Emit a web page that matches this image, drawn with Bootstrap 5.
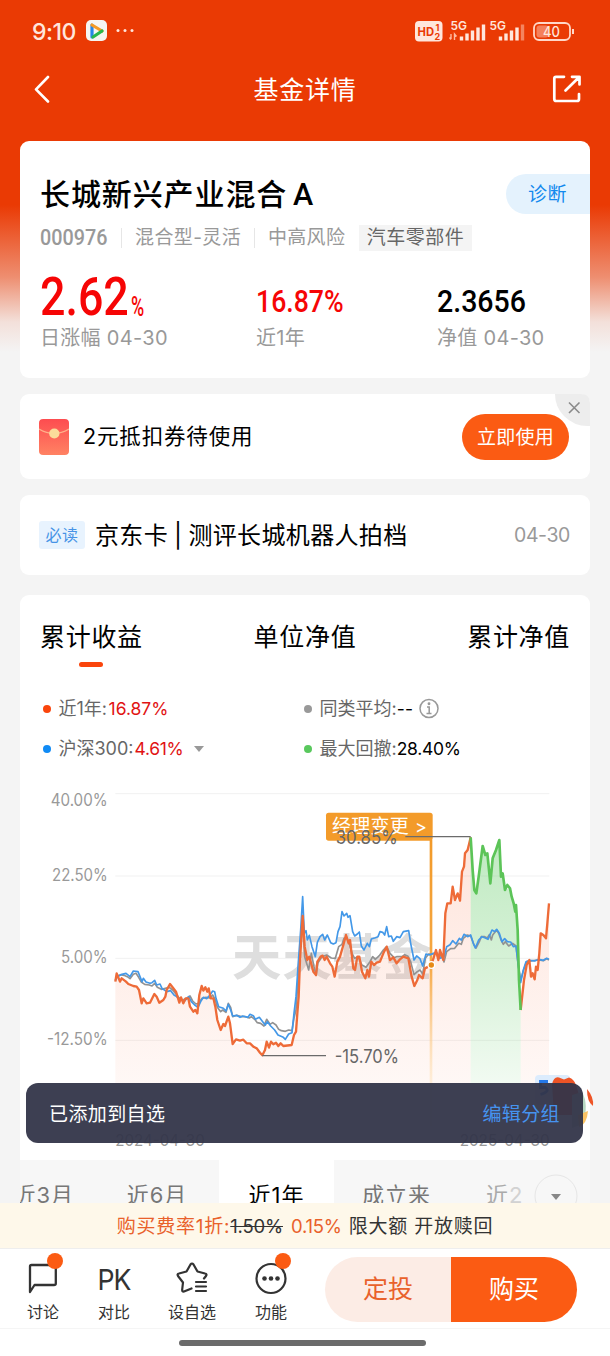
<!DOCTYPE html>
<html lang="zh-CN">
<head>
<meta charset="utf-8">
<meta name="viewport" content="width=device-width, initial-scale=1">
<title>基金详情</title>
<link rel="stylesheet" href="https://cdn.jsdelivr.net/npm/bootstrap@5.3.0/dist/css/bootstrap.min.css">
<style>
body{width:610px;height:1356px;overflow:hidden;background:#f4f4f4;color:#000;font-family:Inter,"Noto Sans CJK SC",sans-serif;line-height:1;white-space:nowrap}
.page-bg{background:linear-gradient(180deg,#ea3a04 0,#ea3a04 205px,#ee8e70 277px,#f3e0da 322px,#f4f4f4 352px)}
.status-row{height:62px;padding:0 35px 0 32px;color:#ffe6dc}
.title-row{height:54px;margin-bottom:25px;padding:0 28px 0 34px}
.page-title{font-size:25px;letter-spacing:.7px;padding:2px 0 0 8px}
.panel{background:#fff;border-radius:9px;margin:0 20px;padding:0 20px;position:relative}
.p-fund{height:236.5px;padding-top:33px;margin-bottom:16.5px}
.fund-name{font-size:30px;font-weight:500;letter-spacing:.9px;padding-top:2px}
.fund-name .share{font-family:Roboto,sans-serif;font-weight:500;font-size:30.5px;margin-left:-3px}
.diag{width:84px;height:40px;margin-right:-20px;padding:1px 1px 0 0;border-radius:20px 0 0 20px;background:#e4f2fd;color:#1289ee;font-size:19px;letter-spacing:.5px}
.meta{height:26px;margin-top:10px;font-size:19px;letter-spacing:.8px;color:#999;padding-top:1px}
.meta .sep{width:1px;height:20px;background:#e6e6e6}
.tagbox{background:#f4f4f4;color:#666;height:26px;width:113px}
.din{font-family:Roboto,sans-serif;display:inline-block;transform-origin:0 50%}
.figures{grid-template-columns:216px 181px 1fr;margin-top:25px;display:grid}
.figures .num{height:44px;line-height:1;font-weight:500}
.cap{font-size:20px;letter-spacing:.3px;color:#999;margin-top:9px}
.red1{color:#f60505}
.p-coupon{height:85px;margin-bottom:16px}
.usebtn{width:107px;height:46px;border-radius:23px;background:#fb5b13;color:#fff;font-size:19px;letter-spacing:.2px;position:relative}
.closer{position:absolute;right:0;top:0}
.p-read{height:80px;margin-bottom:20px}
.must{background:#e8f3fe;color:#4793e6;width:46px;height:28px;border-radius:3px;font-size:16px;letter-spacing:.5px;margin-left:-1px}
.p-chart{height:700px;padding:0}
.tabs3{height:84px;padding:1px 21px 0 20px;font-size:25px;letter-spacing:.7px}
.tabs3 .on::after{content:"";position:absolute;width:24px;height:5px;border-radius:3px;background:#fa450c;left:39px;top:37px}
.legend{display:grid;grid-template-columns:261px 1fr;grid-auto-rows:40px;padding:10px 0 0 23px;font-size:18px;color:#666;height:101px}
.dot{width:8px;height:8px;border-radius:50%;margin-right:7.5px}
.legend b{font-weight:400;letter-spacing:-.3px;font-size:17.5px}
.periods{height:70px;background:#f7f7f7;font-size:22px;letter-spacing:1px;color:#777;overflow:hidden;position:relative}
.periods>div{height:70px;flex:none}
.fee{height:46px;background:#fef8ea;font-size:19px;letter-spacing:.75px;color:#333;border-bottom:1px solid #eee;padding-top:1px}
.fee s,.fee .num{font-size:18.5px;letter-spacing:-.2px}
.org{color:#e9612b}
.bar{height:80px;background:#fff;border-bottom:1px solid #f5f5f5;padding-left:7px;color:#333}
.tool{font-size:16px;position:relative;padding-top:8px;height:80px}
.tool svg,.tool .pk{height:44px;margin-bottom:3px}
.tool .pk{font-size:29px;letter-spacing:-1px;padding-top:8px;transform:scaleX(.92)}
.note{position:absolute;width:16px;height:16px;border-radius:50%;background:#fb5b13;top:4px}
.deal{font-size:25px;width:126px;height:64.5px}
.homebar{height:27px;background:#fff;padding-right:5px}
.homebar i{width:247px;height:6px;border-radius:3px;background:#6b6b6b}
.snack{position:absolute;z-index:5;left:26px;top:1083px;width:557px;height:60px;border-radius:12px;background:rgba(51,53,73,.95);color:#fff;padding:2px 23px 0;font-size:19px;letter-spacing:.4px}
.mascot{position:absolute;z-index:4;left:530px;top:1070px}
</style>
</head>
<body>
<div class="page-bg d-flex flex-column h-100">
<header class="text-white">
 <div class="status-row d-flex align-items-center justify-content-between">
  <div class="d-flex align-items-center">
   <span style="font-size:23px;font-weight:500;letter-spacing:-.5px;padding-top:2px">9:10</span>
   <svg class="ms-2" width="56" height="22" viewBox="0 0 56 22"><rect x="2" y="0" width="21" height="21" rx="5" fill="#f5f5f2"/><path d="M8 5v12" stroke="#2687e8" stroke-width="3.2" stroke-linecap="round"/><path d="M8 5l10 6" stroke="#f49a25" stroke-width="3.2" stroke-linecap="round"/><path d="M18 11l-9 6" stroke="#27b84d" stroke-width="3.2" stroke-linecap="round"/><g fill="#ffe6dc"><circle cx="34" cy="10.500" r="1.500"/><circle cx="41" cy="10.500" r="1.500"/><circle cx="48" cy="10.500" r="1.500"/></g></svg>
  </div>
  <svg width="160" height="24" viewBox="0 0 160 24" font-family="Inter,sans-serif" fill="#ffe6dc">
   <rect x="0" y="2" width="27.500" height="20.500" rx="4"/><text x="2.500" y="17" font-size="12" font-weight="700" fill="#ea3a04" textLength="16.500" lengthAdjust="spacingAndGlyphs">HD</text><text x="20.500" y="11.500" font-size="9" font-weight="700" fill="#ea3a04">1</text><text x="19.500" y="20.500" font-size="9" font-weight="700" fill="#ea3a04">2</text>
   <text x="35.500" y="10.500" font-size="12" font-weight="600" textLength="16.500" lengthAdjust="spacingAndGlyphs">5G</text><text x="74.500" y="10.500" font-size="12" font-weight="600" textLength="16.500" lengthAdjust="spacingAndGlyphs">5G</text>
   <path d="M36 15v5M34.500 18.500l1.500 2M39.500 21v-6l2 2.500" stroke="#ffb99f" stroke-width="1.400" fill="none"/>
   <path d="M46.500 21.500v-4M52 21.500v-7M57.500 21.500v-10M63 21.500v-13M68.500 21.500v-16M85.500 21.500v-4M91 21.500v-7M96.500 21.500v-10M102 21.500v-13" stroke="#ffe6dc" stroke-width="3.400"/><path d="M107.500 21.500v-16" stroke="#f4845f" stroke-width="3.400"/>
   <rect x="119" y="4" width="36" height="17" rx="5" fill="none" stroke="#ffd7c8" stroke-width="1.800"/><rect x="121.500" y="6.500" width="12" height="12" rx="3" fill="#f4805c"/><path d="M158 10v5" stroke="#ffd7c8" stroke-width="2"/><text x="128" y="17.500" font-size="14" font-weight="500" textLength="17" lengthAdjust="spacingAndGlyphs">40</text>
  </svg>
 </div>
 <nav class="title-row d-flex align-items-center justify-content-between">
  <svg width="16" height="28" viewBox="0 0 16 28" fill="none" stroke="#fff" stroke-width="2.600" stroke-linecap="round" stroke-linejoin="round"><path d="M14 2L2 14.300L14 26.500"/></svg>
  <span class="page-title">基金详情</span>
  <svg width="30" height="28" viewBox="0 0 30 28" fill="none" stroke="#fff" stroke-width="2.700" stroke-linecap="round" stroke-linejoin="round"><path d="M12 1.800H4Q2.300 1.800 2.300 3.500V24Q2.300 26 4.300 26H25Q27 26 27 24V19M20 1.800H27.500V9.500M27 2.300L13.500 15.500"/></svg>
 </nav>
</header>

<main class="flex-grow-1 overflow-hidden">
 <section class="panel p-fund">
  <div class="d-flex align-items-center justify-content-between"><h1 class="fund-name m-0">长城新兴产业混合 <span class="share">A</span></h1><div class="diag d-flex align-items-center justify-content-center">诊断</div></div>
  <div class="meta d-flex align-items-center"><span class="din" style="font-size:21.5px;font-weight:500;letter-spacing:0;width:81px;margin-right:0;transform:scaleX(.92)">000976</span><i class="sep"></i><span style="width:119px;margin-left:13px;letter-spacing:.4px">混合型-灵活</span><i class="sep"></i><span style="width:91px;margin-left:13px;letter-spacing:.3px">中高风险</span><span class="tagbox d-flex align-items-center justify-content-center" style="letter-spacing:.5px">汽车零部件</span></div>
  <div class="figures">
   <div><div class="num red1 d-flex align-items-end"><span class="din" style="font-size:53px;width:91px;transform:scaleX(.845);line-height:44px">2.62</span><span class="din" style="font-size:28px;transform:scaleX(.64);line-height:24px">%</span></div><div class="cap">日涨幅 04-30</div></div>
   <div><div class="num red1 d-flex align-items-end"><span class="din" style="font-size:31px;transform:scaleX(.86);line-height:34px">16.87%</span></div><div class="cap">近1年</div></div>
   <div><div class="num d-flex align-items-end"><span class="din" style="font-size:31px;transform:scaleX(.92);line-height:34px">2.3656</span></div><div class="cap">净值 04-30</div></div>
  </div>
 </section>

 <section class="panel p-coupon d-flex align-items-center">
  <svg style="margin-left:-1px" width="30" height="36" viewBox="0 0 29 36" preserveAspectRatio="none"><defs><linearGradient id="env" x2="0" y2="1"><stop stop-color="#fd4c50"/><stop offset="1" stop-color="#ff8263"/></linearGradient></defs><rect width="29" height="36" rx="4" fill="url(#env)"/><path d="M0 10Q14.500 19 29 10" fill="none" stroke="#ffb08a" stroke-width="1.300"/><circle cx="14.800" cy="14.500" r="5" fill="#fbdb9b"/></svg>
  <span class="flex-grow-1" style="font-size:21.5px;letter-spacing:.85px;margin-left:14px">2元抵扣券待使用</span>
  <svg class="closer" width="35" height="33" viewBox="0 0 35 33"><path d="M0 0H26Q35 0 35 9V32Q20 33 9 22Q0 13 0 0Z" fill="#ededed"/><path d="M14 8.500l10.500 10.500M24.500 8.500l-10.500 10.500" stroke="#8a8a8a" stroke-width="1.600"/></svg>
  <div class="usebtn d-flex align-items-center justify-content-center" style="margin-right:1px;padding-top:1px">立即使用</div>
 </section>

 <section class="panel p-read d-flex align-items-center">
  <span class="must d-flex align-items-center justify-content-center">必读</span>
  <span class="flex-grow-1" style="font-size:24px;letter-spacing:.35px;margin-left:10px;padding-top:1px">京东卡<span style="padding:0 6px">|</span>测评长城机器人拍档</span>
  <span style="font-size:19.5px;letter-spacing:-.4px;color:#999;padding-top:1px">04-30</span>
 </section>

 <section class="panel p-chart">
  <div class="tabs3 d-flex align-items-center justify-content-between"><span class="on position-relative">累计收益</span><span>单位净值</span><span style="margin-right:-1px">累计净值</span></div>
  <div class="legend">
   <div class="d-flex align-items-center"><i class="dot" style="background:#fa450c"></i>近1年:<b style="color:#e11313;letter-spacing:0;margin-left:1.5px">16.87%</b></div>
   <div class="d-flex align-items-center"><i class="dot" style="background:#999"></i>同类平均:<b class="text-black" style="letter-spacing:.3px">--</b><svg width="22" height="22" viewBox="0 0 22 22" fill="none" stroke="#999" stroke-width="1.500" style="margin-left:5px"><circle cx="11" cy="10.500" r="9"/><path d="M9 9h2.200V15.500M8.500 15.500h5"/><circle cx="11" cy="5.800" r=".7" fill="#999"/></svg></div>
   <div class="d-flex align-items-center"><i class="dot" style="background:#108bf5"></i>沪深300:<b style="color:#e11313;margin-left:1px">4.61%</b><svg width="12" height="8" viewBox="0 0 12 8" style="margin-left:10px"><path d="M1 1h10L6 7Z" fill="#999"/></svg></div>
   <div class="d-flex align-items-center"><i class="dot" style="background:#59c85d"></i>最大回撤:<b class="text-black">28.40%</b></div>
  </div>
  <svg class="d-block" width="570" height="380" viewBox="0 0 1710 1140" font-family="Inter,'Noto Sans CJK SC',sans-serif">
   <defs>
    <linearGradient id="ga" gradientUnits="userSpaceOnUse" x1="0" y1="170" x2="0" y2="1000"><stop stop-color="#f9602c" stop-opacity=".17"/><stop offset="1" stop-color="#f9602c" stop-opacity=".03"/></linearGradient>
    <linearGradient id="gg" gradientUnits="userSpaceOnUse" x1="0" y1="170" x2="0" y2="1000"><stop stop-color="#57c75b" stop-opacity=".38"/><stop offset=".5" stop-color="#57c75b" stop-opacity=".23"/><stop offset="1" stop-color="#57c75b" stop-opacity=".04"/></linearGradient>
    <linearGradient id="gf" gradientUnits="userSpaceOnUse" x1="0" y1="180" x2="0" y2="930"><stop stop-color="#f29a29"/><stop offset=".5" stop-color="#f6a844"/><stop offset="1" stop-color="#ffe2b6" stop-opacity=".35"/></linearGradient>
   </defs>
   <path d="M286 41H1588M286 288H1588M286 535H1588M286 781H1588" stroke="#f1f1f1" stroke-width="3"/>
   <text x="636" y="586" font-size="148" font-weight="700" fill="#dedede" textLength="600">天天基金</text>
   <path fill="url(#ga)" d="M286 605L290 580 300 605 318 605 340 618 357 630 365 670 390 668 403 642 418 668 436 650 450 612 468 635 478 668 505 655 520 695 532 700 545 618 572 655 586 680 602 750 625 710 638 792 680 790 727 826 740 785 815 795 828 755 840 540 848 408 854 500 862 540 888 585 902 530 920 530 944 590 978 465 1005 570 1018 530 1036 595 1062 555 1100 500 1120 532 1165 535 1183 618 1215 565 1234 555 1248 510 1270 540 1276 400 1282 370 1292 370 1298 320 1305 360 1320 362 1326 275 1335 220 1352 172V1140H286ZM1502 690L1512 600 1528 540 1544 598 1562 460 1578 475 1587 370V1140H1502Z"/>
   <path fill="url(#gg)" d="M1352 172L1358 270 1363 330 1369 340 1376 290 1388 198 1396 225 1402 220 1411 310 1418 235 1428 210 1438 180 1443 290 1448 280 1455 330 1470 325 1481 370 1488 375 1493 450 1502 690V1140H1352Z"/>
   <rect x="1229" y="180" width="8" height="860" fill="url(#gf)"/>
   <g fill="none" stroke-linejoin="round">
    <path stroke="#929292" stroke-width="5" d="M286 600L292 588 302 584 312 586 322 590 330 596 340 583 348 580 356 592 364 606 374 613 388 615 396 618 404 610 412 622 424 628 436 625 448 622 458 630 466 640 476 652 488 660 500 655 510 648 518 663 528 672 536 670 546 655 558 652 570 654 578 645 586 660 592 682 602 695 608 690 618 697 625 670 632 682 638 710 650 706 664 710 676 710 688 714 694 710 704 718 712 728 722 730 732 738 740 718 750 733 758 728 768 735 776 748 784 752 796 754 806 750 816 752 822 714 828 690 834 600 842 490 848 425 854 530 866 570 874 520 882 560 888 586 894 548 906 530 920 525 934 534 946 535 956 500 966 493 972 475 980 472 988 492 996 520 1004 535 1014 530 1026 555 1038 562 1050 545 1058 530 1066 538 1078 527 1090 510 1100 500 1110 520 1122 533 1130 530 1146 530 1154 524 1164 529 1172 545 1182 584 1192 575 1200 570 1208 582 1216 535 1226 522 1240 522 1248 518 1256 535 1264 524 1272 546 1280 515 1292 506 1304 505 1316 490 1324 493 1330 475 1342 465 1352 468 1362 495 1368 504 1378 485 1384 470 1394 470 1402 474 1408 464 1414 480 1418 465 1430 450 1436 460 1444 482 1450 493 1456 485 1466 498 1478 490 1488 498 1494 550 1502 600 1510 572 1520 545 1538 542 1556 540 1570 542 1580 536 1587 540"/>
    <path stroke="#4398e8" stroke-width="5" d="M286 602L292 590 306 583 318 580 330 590 340 573 354 575 360 590 366 605 370 595 378 606 390 610 396 608 404 601 410 615 420 612 426 625 440 635 452 632 462 645 470 650 480 660 494 663 506 650 514 665 524 675 534 682 542 665 550 652 560 656 570 645 578 633 584 635 588 655 596 680 610 685 618 693 625 673 632 690 638 708 650 706 660 712 668 708 684 712 690 703 700 707 706 718 718 712 728 725 736 735 742 725 752 738 764 750 774 765 790 772 796 778 806 762 816 758 822 700 828 650 834 560 842 450 848 350 853 460 858 452 862 480 868 466 876 500 886 530 892 487 900 470 908 463 914 480 922 465 932 488 940 492 948 488 954 455 960 440 966 395 972 408 980 400 984 412 990 407 998 455 1004 468 1012 462 1018 456 1024 498 1032 510 1042 490 1048 500 1054 477 1066 473 1074 470 1080 455 1088 457 1094 465 1100 440 1106 470 1114 468 1120 484 1130 470 1140 473 1150 455 1166 452 1172 490 1182 540 1190 528 1200 536 1208 558 1218 522 1230 525 1240 520 1250 518 1260 535 1272 530 1280 500 1290 494 1298 482 1308 492 1318 475 1324 480 1332 463 1344 470 1352 465 1360 490 1366 504 1376 480 1386 470 1396 474 1404 478 1410 464 1416 450 1424 455 1430 448 1438 460 1446 485 1454 476 1462 485 1472 486 1480 500 1488 498 1494 550 1502 608 1510 570 1518 545 1530 541 1544 543 1556 538 1570 541 1580 535 1587 538"/>
    <path stroke="#ee6b38" stroke-width="7" d="M286 605L290 580 300 605 305 595 318 605 325 612 340 618 350 620 357 630 365 670 370 655 380 670 390 668 403 642 410 650 418 668 430 660 436 650 440 630 450 612 460 625 468 635 478 668 483 652 490 670 497 655 505 655 510 680 520 695 526 690 532 700 538 645 545 618 550 632 556 622 562 635 566 625 572 655 580 655 586 680 592 720 602 750 610 732 615 738 625 710 630 730 638 792 648 778 660 782 670 779 680 790 690 790 700 800 710 805 720 818 727 826 735 810 740 785 747 803 753 785 760 793 768 788 775 798 782 790 790 798 815 795 822 765 828 755 832 700 836 650 840 540 848 408 854 500 858 520 862 540 868 530 880 575 888 585 892 545 902 530 908 527 914 540 920 530 930 550 937 560 944 590 952 545 960 530 970 495 978 465 986 490 990 480 1000 565 1005 570 1012 530 1018 530 1026 575 1036 595 1042 570 1047 590 1054 545 1062 555 1070 548 1080 545 1090 520 1100 500 1110 540 1120 532 1130 550 1140 538 1150 530 1165 535 1175 590 1183 618 1192 600 1197 585 1208 595 1215 565 1225 560 1234 555 1242 530 1248 510 1255 540 1260 510 1270 540 1276 400 1282 370 1292 370 1298 320 1305 360 1313 340 1320 362 1326 275 1332 260 1335 220 1343 210 1352 172M1502 690L1512 600 1520 555 1528 540 1533 590 1538 580 1544 598 1548 560 1553 570 1558 520 1562 460 1570 465 1578 475 1582 430 1587 370"/>
    <path stroke="#5cc458" stroke-width="8" d="M1352 172L1358 270 1363 330 1369 340 1376 290 1388 198 1396 225 1402 220 1411 310 1418 235 1428 210 1438 180 1443 290 1448 280 1455 330 1462 315 1470 325 1475 350 1481 370 1486 395 1488 375 1493 450 1497 600 1502 690"/>
   </g>
   <circle cx="1234" cy="555" r="10" fill="#e68a17" stroke="#fff" stroke-width="4"/>
   <rect x="918" y="98" width="320" height="84" rx="8" fill="#f39b2a"/>
   <text x="936" y="160" font-size="57" fill="#fff" textLength="230">经理变更</text><text x="1185" y="159" font-size="54" fill="#fff">&gt;</text>
   <path d="M1156 170H1352M727 827H918" stroke="#6b6b6b" stroke-width="4"/>
   <g fill="#666" font-size="54"><text x="947" y="191" textLength="186" lengthAdjust="spacingAndGlyphs">30.85%</text><text x="944" y="848" textLength="193" lengthAdjust="spacingAndGlyphs">-15.70%</text></g>
   <g fill="#999" font-size="50"><text x="92" y="79" textLength="171" lengthAdjust="spacingAndGlyphs">40.00%</text><text x="96" y="303" textLength="167" lengthAdjust="spacingAndGlyphs">22.50%</text><text x="123" y="549" textLength="140" lengthAdjust="spacingAndGlyphs">5.00%</text><text x="81" y="796" textLength="182" lengthAdjust="spacingAndGlyphs">-12.50%</text></g>
   <rect x="270" y="1040" width="1340" height="100" fill="#fff"/>
   <g fill="#999" font-size="48"><text x="286" y="1098" textLength="268" lengthAdjust="spacingAndGlyphs">2024-04-30</text><text x="1319" y="1098" textLength="270" lengthAdjust="spacingAndGlyphs">2025-04-30</text></g>
  </svg>
  <div class="periods d-flex text-center">
   <div class="d-flex align-items-center justify-content-end" style="width:54px">近3月</div>
   <div class="d-flex align-items-center justify-content-center" style="width:145px;padding-left:21px">近6月</div>
   <div class="d-flex align-items-center justify-content-center bg-white text-black" style="width:115px">近1年</div>
   <div class="d-flex align-items-center justify-content-center" style="width:125px">成立来</div>
   <div class="d-flex align-items-center" style="width:131px;padding-left:27px;color:#aaa">近<span style="color:#d2d2d2">2</span></div>
   <svg style="position:absolute;right:12px;top:14px" width="44" height="44" viewBox="0 0 44 44"><circle cx="22" cy="22" r="21" fill="#f7f7f7" stroke="#e6e6e6"/><path d="M17 20h10l-5 6z" fill="#888"/></svg>
  </div>
 </section>
</main>

<footer class="position-relative">
 <div class="fee d-flex align-items-center justify-content-center"><span class="org">购买费率1折:</span><s>1.50%</s><span class="num org" style="margin:0 7px 0 8px">0.15%</span><span>限大额 开放赎回</span></div>
 <div class="bar d-flex">
  <div class="tool text-center" style="width:72px"><svg class="d-block mx-auto" width="34" height="44" viewBox="0 0 34 44" fill="none" stroke="#333" stroke-width="2.300" stroke-linejoin="round"><path d="M4 35V9.500Q4 8 5.500 8H28Q29.800 8 29.800 9.500V26.500Q29.800 28 28 28H8.500Z"/></svg><span class="d-block">讨论</span><i class="note" style="left:40px"></i></div>
  <div class="tool text-center" style="width:70px"><div class="pk">PK</div><span class="d-block">对比</span></div>
  <div class="tool text-center" style="width:86px"><svg class="d-block mx-auto" width="34" height="44" viewBox="0 0 34 44" fill="none" stroke="#333" stroke-width="2.200" stroke-linejoin="round" stroke-linecap="round"><g transform="translate(0 -1.500)"><path d="M16.500 33L9 36Q7 36.500 7.200 34L8 27L3 20.500Q1.800 18.500 4 18L11.500 16L15.500 9Q17 7 18.500 9L22.500 16L30 18Q32.300 18.500 31 20.500L29 23M21 26.500H31M21 31H31M21 35.500H31"/></g></svg><span class="d-block">设自选</span></div>
  <div class="tool text-center" style="width:72px"><svg class="d-block mx-auto" width="34" height="44" viewBox="0 0 34 44"><circle cx="17" cy="21.500" r="14.500" fill="none" stroke="#333" stroke-width="2.200"/><g fill="#333"><circle cx="10.500" cy="21.500" r="2.300"/><circle cx="17" cy="21.500" r="2.300"/><circle cx="23.500" cy="21.500" r="2.300"/></g></svg><span class="d-block">功能</span><i class="note" style="left:40px"></i></div>
  <div class="d-flex" style="margin:8px 0 0 18px"><div class="deal d-flex align-items-center justify-content-center org rounded-start-pill" style="background:#fcece5">定投</div><div class="deal d-flex align-items-center justify-content-center text-white rounded-end-pill" style="background:#fb5b13">购买</div></div>
 </div>
 <div class="homebar d-flex justify-content-center align-items-center"><i></i></div>
</footer>
</div>

<svg class="mascot" width="68" height="76" viewBox="0 0 68 76"><rect x="5" y="5" width="35" height="30" rx="4" fill="#dcecfd"/><path d="M18 11.500h-7.500v6h5q5 4-5 7" stroke="#2578e8" stroke-width="2.800" fill="none"/><path d="M22 14Q24 6 29 7.500L34 9.500 39 7.500Q44 9 46 15L50 28 48 45H24Z" fill="#ee5426"/><path d="M52 22Q59 34 53 54L42 58V25Z" fill="#b7d8c3"/><path d="M58 41Q57 54 49 57L48 45Z" fill="#fac365"/><path d="M57 19Q64 27 63 36Q57 32 57 19Z" fill="#ee5426"/></svg>
<div class="snack d-flex align-items-center justify-content-between"><span>已添加到自选</span><span style="color:#4693ef">编辑分组</span></div>
<script src="https://cdn.jsdelivr.net/npm/bootstrap@5.3.0/dist/js/bootstrap.bundle.min.js"></script>
</body>
</html>
